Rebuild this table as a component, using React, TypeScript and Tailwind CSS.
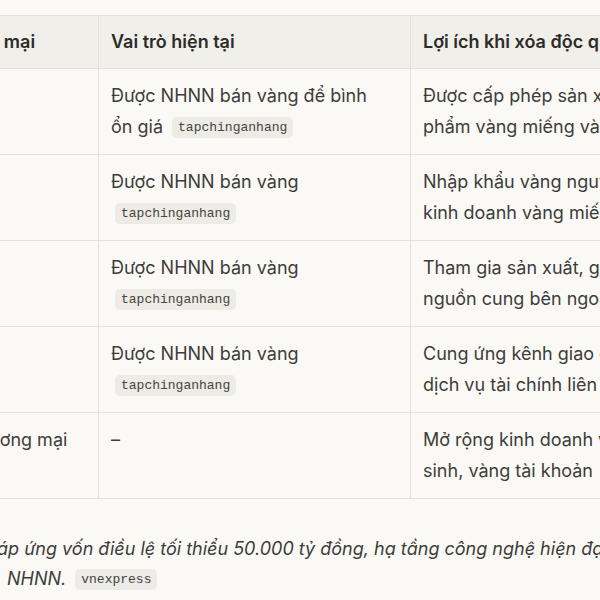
import React from 'react';

type Row = {
  bank: string;
  role: React.ReactNode;
  benefit: string[];
};

function Chip({ children, className = '' }: { children: React.ReactNode; className?: string }) {
  return (
    <code
      className={`ml-1 inline-block rounded-[5px] bg-[#ecebe5] px-[6px] py-[1px] align-middle font-['Liberation_Mono',monospace] text-[13px] leading-[19px] text-[#45453f] ${className}`}
    >
      {children}
    </code>
  );
}

const rows: Row[] = [
  {
    bank: 'Vietcombank',
    role: (
      <>
        Được NHNN bán vàng để bình
        <br />
        ổn giá <Chip>tapchinganhang</Chip>
      </>
    ),
    benefit: ['Được cấp phép sản xuất sản', 'phẩm vàng miếng và kinh doanh'],
  },
  {
    bank: 'BIDV',
    role: (
      <>
        Được NHNN bán vàng
        <br />
        <Chip>tapchinganhang</Chip>
      </>
    ),
    benefit: ['Nhập khẩu vàng nguyên liệu để', 'kinh doanh vàng miếng'],
  },
  {
    bank: 'VietinBank',
    role: (
      <>
        Được NHNN bán vàng
        <br />
        <Chip>tapchinganhang</Chip>
      </>
    ),
    benefit: ['Tham gia sản xuất, gia công', 'nguồn cung bên ngoài'],
  },
  {
    bank: 'Agribank',
    role: (
      <>
        Được NHNN bán vàng
        <br />
        <Chip>tapchinganhang</Chip>
      </>
    ),
    benefit: ['Cung ứng kênh giao dịch vàng', 'dịch vụ tài chính liên quan'],
  },
  {
    bank: 'Các ngân hàng thương mại',
    role: '–',
    benefit: ['Mở rộng kinh doanh vàng phái', 'sinh, vàng tài khoản'],
  },
];

export default function App() {
  return (
    <div className="h-[600px] w-[600px] overflow-hidden bg-[#faf9f5] font-['Inter',sans-serif] text-[18px] text-[#3d3d3a]">
      <div className="-ml-[174px] w-[1000px] pt-[15px]">
        <table className="w-[984px] table-fixed border-collapse">
          <colgroup>
            <col className="w-[272px]" />
            <col className="w-[312px]" />
            <col className="w-[400px]" />
          </colgroup>
          <thead>
            <tr className="bg-[#f0efea] text-left text-[#2c2c29]">
              <th className="border border-[#e3e1da] px-3 py-[11px] font-semibold leading-[30px]">Ngân hàng thương mại</th>
              <th className="border border-[#e3e1da] px-3 py-[11px] font-semibold leading-[30px]">Vai trò hiện tại</th>
              <th className="whitespace-nowrap border border-[#e3e1da] px-3 py-[11px] font-semibold leading-[30px]">Lợi ích khi xóa độc quyền</th>
            </tr>
          </thead>
          <tbody>
            {rows.map((r) => (
              <tr key={r.bank} className="align-top">
                <td className="border border-[#e3e1da] px-3 py-3 leading-[30.5px]">{r.bank}</td>
                <td className="whitespace-nowrap border border-[#e3e1da] px-3 py-3 leading-[30.5px]">{r.role}</td>
                <td className="whitespace-nowrap border border-[#e3e1da] px-3 py-3 leading-[30.5px]">
                  {r.benefit[0]}
                  <br />
                  {r.benefit[1]}
                </td>
              </tr>
            ))}
          </tbody>
        </table>
        <div className="ml-[160px] mt-[35px] whitespace-nowrap italic leading-[30px]">
          <div className="h-[30px]">đáp ứng vốn điều lệ tối thiểu 50.000 tỷ đồng, hạ tầng công nghệ hiện đại</div>
          <div className="ml-[21px] flex h-[30px] items-center">
            NHNN.
            <Chip className="ml-[9px] not-italic">vnexpress</Chip>
          </div>
        </div>
      </div>
    </div>
  );
}
